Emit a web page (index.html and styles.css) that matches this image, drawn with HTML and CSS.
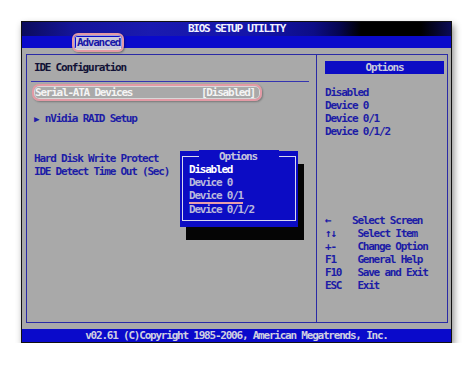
FILE: index.html
```html
<!DOCTYPE html>
<html lang="en">
  <head>
    <meta charset="utf-8" />
    <meta name="viewport" content="width=device-width, initial-scale=1" />
    <title>BIOS Setup Utility</title>
    <link rel="stylesheet" href="styles.css">
  </head>

  <body>
    <div class="screen">
      <div class="title">BIOS SETUP UTILITY</div>
      <div class="tabs">
        <span class="tab">Advanced</span>
      </div>

      <div class="main">
        <div class="frame">
          <!-- left: settings list -->
          <div class="left">
            <div class="heading">IDE Configuration</div>
            <div class="rule"></div>
            <div class="row selected">
              <span>Serial-ATA Devices</span>
              <span>[Disabled]</span>
            </div>
            <div class="row sub"><span class="arrow">&#9654;</span> nVidia RAID Setup</div>
            <div class="group">
              <div class="row">Hard Disk Write Protect</div>
              <div class="row">IDE Detect Time Out (Sec)</div>
            </div>

            <!-- popup with the choices for the selected item -->
            <div class="popup">
              <div class="popup-box">
                <div class="popup-title"><span>Options</span></div>
                <div class="choice current">Disabled</div>
                <div class="choice">Device 0</div>
                <div class="choice"><span class="marked">Device 0/1</span></div>
                <div class="choice">Device 0/1/2</div>
              </div>
            </div>
          </div>

          <!-- right: help panel -->
          <div class="right">
            <div class="opt-head">Options</div>
            <div class="opt-list">
              <div>Disabled</div>
              <div>Device 0</div>
              <div>Device 0/1</div>
              <div>Device 0/1/2</div>
            </div>
            <div class="keys">
              <div class="key">&#8592;    Select Screen</div>
              <div class="key">&#8593;&#8595;    Select Item</div>
              <div class="key">+-    Change Option</div>
              <div class="key">F1    General Help</div>
              <div class="key">F10   Save and Exit</div>
              <div class="key">ESC   Exit</div>
            </div>
          </div>
        </div>
      </div>

      <div class="footer">v02.61 (C)Copyright 1985-2006, American Megatrends, Inc.</div>
    </div>
  </body>
</html>
```

FILE: styles.css
```css
body {
  margin: 0;
  background-color: #fff;
  font-family: "DejaVu Sans Mono", "Liberation Mono", monospace;
  font-weight: bold;
  font-size: 11px;
  letter-spacing: -1.22px;
  line-height: 13px;
}

.screen {
  width: 431px;
  height: 322px;
  margin: 21px 0 0 21px;
  border: 1px solid #111;
  box-sizing: border-box;
  display: flex;
  flex-direction: column;
  background-color: #a9a9a9;
  box-shadow: 2px 4px 7px rgba(0, 0, 0, 0.45);
}

.title {
  height: 14px;
  line-height: 14px;
  text-align: center;
  color: #f2f2ff;
  background: linear-gradient(90deg, #0b0b5c 0%, #15159a 12%, #1a1ab0 30%, #1414a8 55%, #0d0d86 68%, #050550 74%, #000 79%, #000 93%, #0b0b55 100%);
}

.tabs {
  height: 12px;
  background-color: #0a0acb;
  padding-left: 54px;
}

.tab {
  position: relative;
  display: inline-block;
  height: 12px;
  line-height: 12px;
  padding: 0 1px;
  color: #1818a8;
  background-color: #c9c9dc;
}

/* pink marker round the active tab */
.tab::after {
  content: '';
  position: absolute;
  left: -4px;
  right: -3px;
  top: -4px;
  bottom: -3px;
  border: 2px solid #e39aa5;
  border-radius: 6px;
  box-shadow: inset 0 0 0 1px rgba(255, 255, 255, 0.6), 1px 1px 2px rgba(0, 0, 0, 0.35);
}

.main {
  flex: 1;
  padding: 6px 3px 6px 4px;
  display: flex;
}

.frame {
  flex: 1;
  border: 1px solid #2a2aa6;
  display: grid;
  grid-template-columns: 290px 1fr;
}

.left {
  position: relative;
  border-right: 1px solid #2a2aa6;
  padding-top: 6px;
}

.heading {
  padding-left: 7px;
  color: #121236;
}

.rule {
  height: 1px;
  margin: 7px 7px 0 4px;
  background-color: #3434b0;
}

.row {
  color: #1c1ca6;
  padding-left: 7px;
}

.row.selected {
  display: flex;
  justify-content: space-between;
  width: 230px;
  box-sizing: border-box;
  margin: 2px 0 0 5px;
  padding: 0 5px 0 1px;
  color: #f4f4f4;
  border: 2px solid #e39aa5;
  border-radius: 7px;
  box-shadow: inset 0 0 0 1px rgba(255, 255, 255, 0.55), 1px 1px 2px rgba(0, 0, 0, 0.3);
}

.row.sub {
  margin-top: 11px;
}

.arrow {
  font-size: 9px;
  letter-spacing: 0;
}

.group {
  margin-top: 26px;
}

.popup {
  position: absolute;
  left: 153px;
  top: 96px;
  width: 118px;
  height: 76px;
  background-color: #0c0cc4;
  box-shadow: 6px 13px 0 #050505;
  padding: 5px 2px 6px 2px;
  box-sizing: border-box;
}

.popup-box {
  height: 100%;
  border: 1px solid #d8d8ee;
  box-sizing: border-box;
  padding-left: 6px;
}

.popup-title {
  height: 13px;
  margin: -7px 0 0 -6px;
  text-align: center;
}

.popup-title span {
  background-color: #0c0cc4;
  color: #c4c4dc;
  padding: 0 22px 0 20px;
}

.choice {
  color: #b9b9dc;
}

.choice.current {
  color: #fff;
}

.marked {
  display: inline-block;
  line-height: 12px;
  border-bottom: 2px solid #e8a0aa;
  margin-bottom: -1px;
}

.right {
  padding-top: 6px;
}

.opt-head {
  margin: 0 3px 0 8px;
  height: 13px;
  text-align: center;
  color: #c8c8dc;
  background-color: #0c0cc4;
}

.opt-list {
  margin-top: 12px;
  padding-left: 8px;
  color: #1c1ca6;
}

.keys {
  margin-top: 76px;
  padding-left: 8px;
  color: #1c1ca6;
}

.key {
  white-space: pre;
}

.footer {
  height: 13px;
  line-height: 13px;
  text-align: center;
  color: #cfcfe2;
  background-color: #0a0acb;
}
```
